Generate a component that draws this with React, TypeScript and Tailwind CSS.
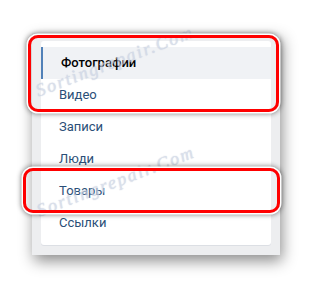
import React from 'react';

const items = ['Фотографии', 'Видео', 'Записи', 'Люди', 'Товары', 'Ссылки'];

const Watermark = ({ className }: { className: string }) => (
  <div
    className={`absolute w-[190px] text-center text-[18px] italic tracking-[2px] text-[#c9d2e3] opacity-70 pointer-events-none ${className}`}
    style={{ fontFamily: '"Liberation Serif", serif', textShadow: '0 0 2px #fff, 0 0 1px #8f9cb8' }}
  >
    Sortingrepair.Com
  </div>
);

export default function App() {
  return (
    <div className="relative w-[312px] h-[287px] bg-white overflow-hidden pt-[33px] pl-[32px]" style={{ fontFamily: 'Roboto, "Liberation Sans", sans-serif' }}>
      {/* серая подложка меню */}
      <div className="w-[248px] bg-[#edeef0] pt-[8px] pb-[10px] px-[9px] shadow-[2px_6px_14px_rgba(0,0,0,0.45)]">
        <div className="bg-white rounded-[3px] py-[6px] shadow-[0_1px_0_#dcdfe4]">
          {items.map((label, i) => (
            <div
              key={label}
              className={`h-8 flex items-center pl-[18px] text-[13px] ${
                i === 0
                  ? 'bg-[#f0f2f5] border-l-2 border-[#5181b8] font-medium text-black'
                  : 'text-[#2b4f78]'
              }`}
            >
              {label}
            </div>
          ))}
        </div>
      </div>

      {/* водяные знаки */}
      <Watermark className="left-[20px] top-[48px] -rotate-[21deg]" />
      <Watermark className="left-[21px] top-[168px] -rotate-[21deg]" />

      {/* красные рамки */}
      <div className="absolute left-[28px] top-[35px] w-[251px] h-[77px] rounded-[10px] border-[3px] border-[#f00] shadow-[0_0_0_1.5px_#fff,0_0_5px_2px_rgba(0,0,0,0.45)]" />
      <div className="absolute left-[23px] top-[168px] w-[257px] h-[45px] rounded-[10px] border-[3px] border-[#f00] shadow-[0_0_0_1.5px_#fff,0_0_5px_2px_rgba(0,0,0,0.45)]" />
    </div>
  );
}
